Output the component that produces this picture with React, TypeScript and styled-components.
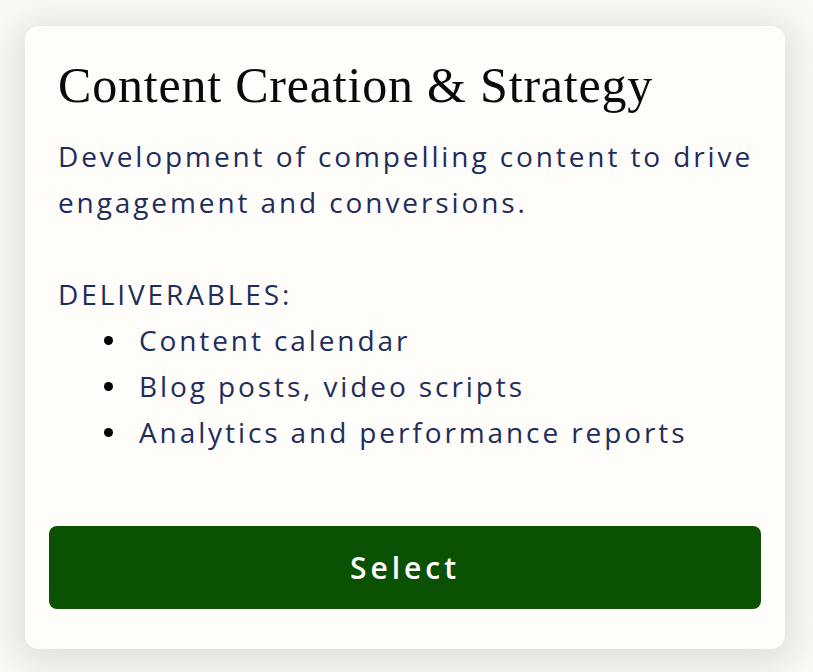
import React from "react";
import styled, { createGlobalStyle } from "styled-components";

const GlobalStyle = createGlobalStyle`
  html, body {
    margin: 0;
    padding: 0;
    background: #faf9f6;
  }
  #root {
    min-height: 672px;
  }
`;

const Page = styled.div`
  box-sizing: border-box;
  width: 813px;
  height: 672px;
  padding: 26px 28px 23px 25px;
  display: flex;
`;

const Card = styled.div`
  box-sizing: border-box;
  flex: 1;
  display: flex;
  flex-direction: column;
  background: #fffdf9;
  border-radius: 14px;
  box-shadow: 0 6px 36px 10px rgba(0, 0, 0, 0.1);
  padding: 28px 24px 40px 24px;
`;

const Title = styled.h2`
  margin: 0 0 0 9px;
  font-family: "Liberation Serif", serif;
  font-weight: 400;
  font-size: 50px;
  letter-spacing: 0.8px;
  line-height: 62px;
  color: #0a0a0a;
`;

const Body = styled.div`
  margin: 17px 0 0 9px;
  font-family: "Open Sans", sans-serif;
  font-size: 28px;
  letter-spacing: 2.9px;
  line-height: 46px;
  color: #1e2d5c;
  flex: 1;
`;

const Para = styled.p`
  margin: 0 0 46px 0;
`;

const List = styled.ul`
  margin: 0;
  padding: 0;
  list-style: none;
`;

const Item = styled.li`
  display: flex;
  align-items: center;
`;

const Dot = styled.span`
  width: 9px;
  height: 9px;
  border-radius: 50%;
  background: #000;
  margin: 0 26px 0 46px;
  flex-shrink: 0;
`;

const SelectButton = styled.button`
  height: 83px;
  border: none;
  border-radius: 8px;
  background: #0b5103;
  color: #ffffff;
  font-family: "Open Sans", sans-serif;
  font-weight: 600;
  font-size: 30px;
  letter-spacing: 4px;
  cursor: pointer;
`;

const deliverables = [
  "Content calendar",
  "Blog posts, video scripts",
  "Analytics and performance reports",
];

export default function App() {
  return (
    <>
      <GlobalStyle />
      <Page>
        <Card>
          <Title>Content Creation &amp; Strategy</Title>
          <Body>
            <Para>
              Development of compelling content to drive engagement and
              conversions.
            </Para>
            DELIVERABLES:
            <List>
              {deliverables.map((d) => (
                <Item key={d}>
                  <Dot />
                  {d}
                </Item>
              ))}
            </List>
          </Body>
          <SelectButton>Select</SelectButton>
        </Card>
      </Page>
    </>
  );
}
